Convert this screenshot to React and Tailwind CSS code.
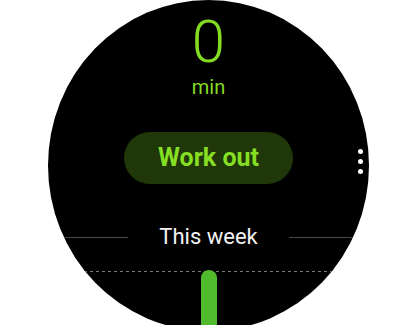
export default function App() {
  const font = { fontFamily: 'Roboto, "Noto Sans", sans-serif' };
  return (
    <div className="w-[420px] h-[325px] bg-white overflow-hidden" style={font}>
      <div className="relative ml-[48px] w-[321px] h-[331px] rounded-[50%] bg-black overflow-hidden flex flex-col items-center">
        <div className="shrink-0 mt-[12px] text-[60px] leading-[60px] font-light text-[#84dc22]">0</div>
        <div className="shrink-0 mt-[5px] text-[20px] leading-[20px] text-[#84dc22]">min</div>
        <button className="shrink-0 mt-[35px] w-[169px] h-[52px] rounded-full bg-[#1f3709] flex items-center justify-center text-[25px] font-bold text-[#86df22]">
          Work out
        </button>
        <div className="shrink-0 mt-[42px] w-full h-[22px] flex items-center">
          <div className="flex-1 h-px bg-[#4a4a4a]" />
          <div className="mx-[31px] text-[22px] leading-[22px] text-[#f2f2f2]">This week</div>
          <div className="flex-1 h-px bg-[#4a4a4a]" />
        </div>
        <div className="shrink-0 mt-[23px] w-full h-px bg-[repeating-linear-gradient(90deg,#7a7a7a_0px,#7a7a7a_3px,transparent_3px,transparent_6px)]" />
        <div className="shrink-0 -mt-[2px] w-[16px] h-[70px] rounded-t-full bg-[#50bb2c] ml-[1px]" />
        <div className="absolute left-[310px] top-[149px] flex flex-col gap-[5px]">
          <div className="w-[5px] h-[5px] rounded-full bg-white" />
          <div className="w-[5px] h-[5px] rounded-full bg-white" />
          <div className="w-[5px] h-[5px] rounded-full bg-white" />
        </div>
      </div>
    </div>
  );
}
